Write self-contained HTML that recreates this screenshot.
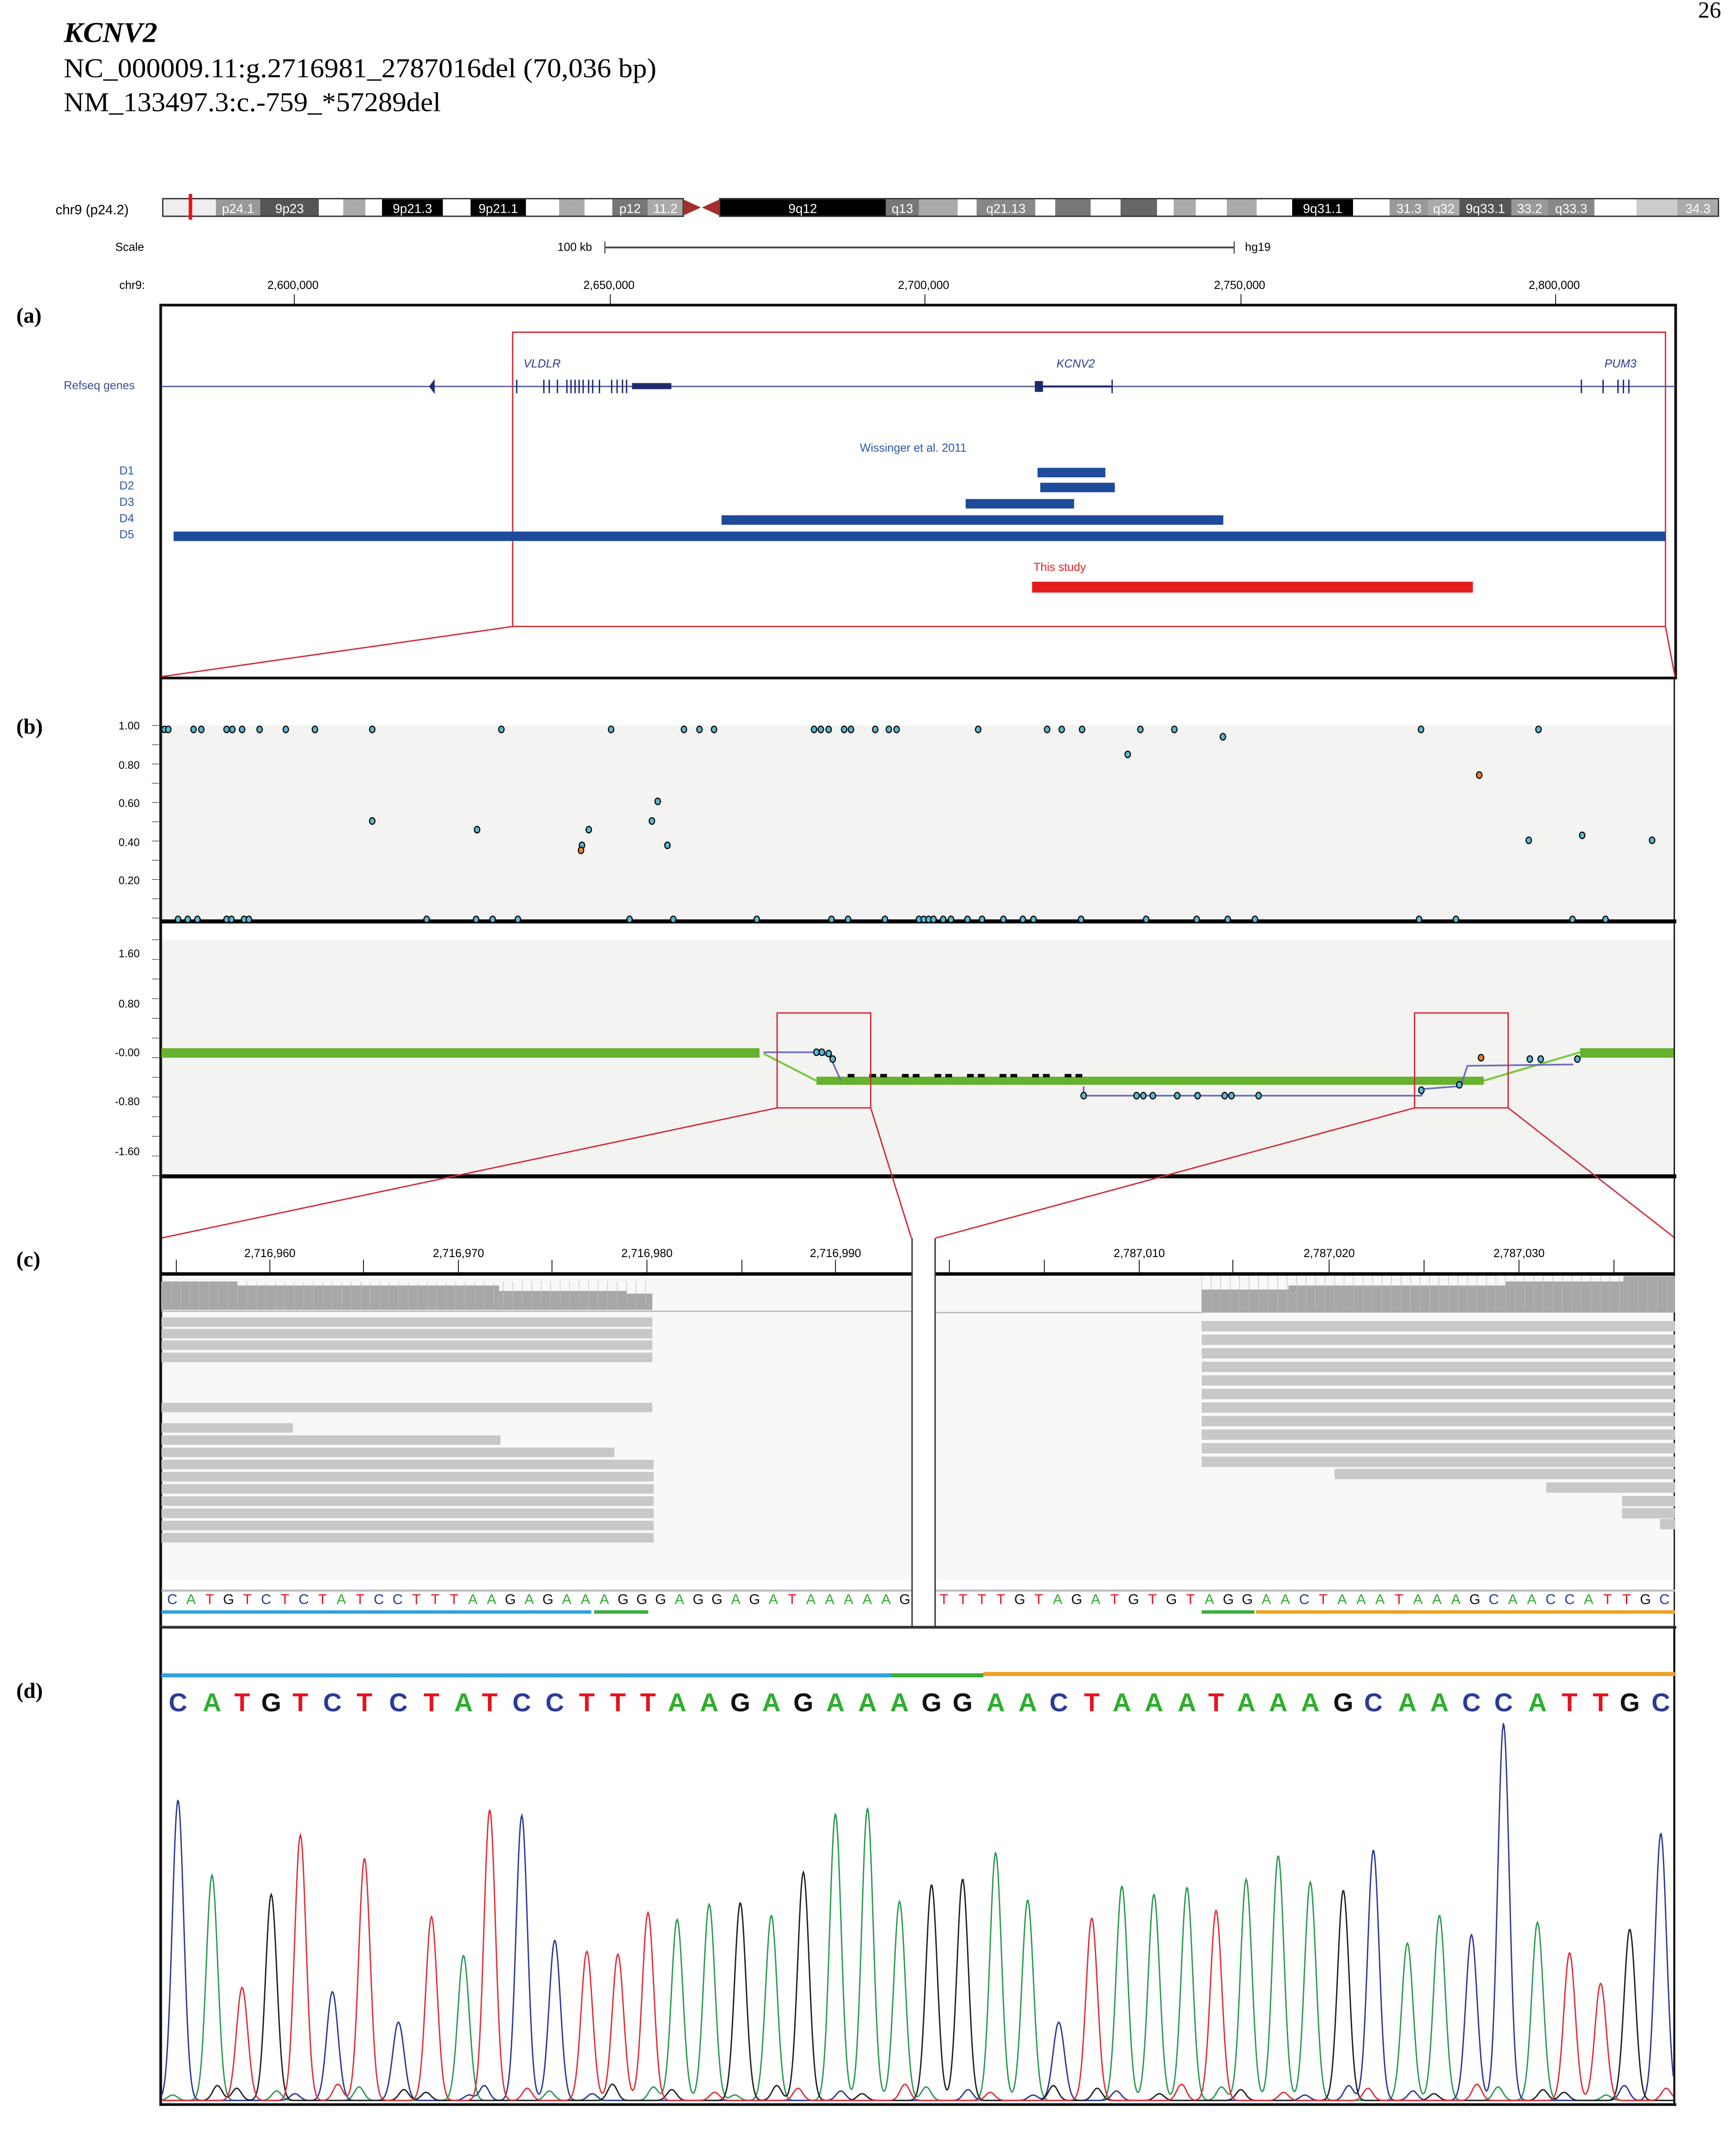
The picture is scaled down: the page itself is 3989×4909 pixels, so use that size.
<!DOCTYPE html>
<html><head><meta charset="utf-8">
<style>
html,body{margin:0;padding:0;background:#fff;}
svg{display:block;}
text{font-family:"Liberation Sans",sans-serif;}
.serif{font-family:"Liberation Serif",serif;}
</style></head>
<body>
<svg id="s" xmlns="http://www.w3.org/2000/svg" width="3989" height="4909" viewBox="0 0 1280 1575.2" preserveAspectRatio="none">
<text class="serif" x="47" y="31" font-size="21" font-weight="bold" font-style="italic" textLength="69" lengthAdjust="spacingAndGlyphs">KCNV2</text>
<text class="serif" x="47" y="57" font-size="20" textLength="437" lengthAdjust="spacingAndGlyphs">NC_000009.11:g.2716981_2787016del (70,036 bp)</text>
<text class="serif" x="47" y="82" font-size="20" textLength="278" lengthAdjust="spacingAndGlyphs">NM_133497.3:c.-759_*57289del</text>
<text class="serif" x="1252" y="13" font-size="17">26</text>

<text x="41" y="158" font-size="10">chr9 (p24.2)</text>
<g id="ideo"></g>
<text x="85" y="185" font-size="8.5">Scale</text>
<text x="411" y="185" font-size="8.5">100 kb</text>
<line x1="446" y1="182.5" x2="910" y2="182.5" stroke="#444" stroke-width="1.3"/>
<line x1="446" y1="178" x2="446" y2="187" stroke="#444" stroke-width="0.8"/>
<line x1="910" y1="178" x2="910" y2="187" stroke="#444" stroke-width="0.8"/>
<text x="918" y="185" font-size="8.5">hg19</text>
<text x="88" y="213" font-size="8.5">chr9:</text>
<g font-size="8.5" text-anchor="middle">
<text x="216" y="213">2,600,000</text><text x="449" y="213">2,650,000</text><text x="681" y="213">2,700,000</text><text x="914" y="213">2,750,000</text><text x="1146" y="213">2,800,000</text>
</g>
<g stroke="#000" stroke-width="0.6">
<line x1="217" y1="217" x2="217" y2="225"/><line x1="450" y1="217" x2="450" y2="225"/><line x1="682" y1="217" x2="682" y2="225"/><line x1="915" y1="217" x2="915" y2="225"/><line x1="1147" y1="217" x2="1147" y2="225"/>
</g>

<g class="serif" font-size="16" font-weight="bold">
<text class="serif" x="12" y="238">(a)</text>
<text class="serif" x="12" y="541">(b)</text>
<text class="serif" x="12" y="934">(c)</text>
<text class="serif" x="12" y="1252">(d)</text>
</g>

<rect x="118.5" y="225" width="1117" height="275" fill="none" stroke="#111" stroke-width="2"/>
<rect x="378" y="245" width="850" height="217" fill="none" stroke="#d32a3a" stroke-width="1"/>
<line x1="378" y1="462" x2="119" y2="499" stroke="#d32a3a" stroke-width="1"/>
<line x1="1228" y1="462" x2="1235" y2="499" stroke="#d32a3a" stroke-width="1"/>
<text x="47" y="287" font-size="8.5" fill="#3b4f8f">Refseq genes</text>
<line x1="119" y1="285" x2="1235" y2="285" stroke="#56608f" stroke-width="1"/>
<g fill="#1e2a6e" stroke="#1e2a6e">
<path d="M317 285 l3 -4 v8 z"/>
<line x1="381" y1="280" x2="381" y2="290" stroke-width="1"/>
<line x1="401" y1="280" x2="401" y2="290"/><line x1="405" y1="280" x2="405" y2="290"/><line x1="411" y1="280" x2="411" y2="290"/>
<line x1="418" y1="280" x2="418" y2="290"/><line x1="421" y1="280" x2="421" y2="290"/><line x1="424" y1="280" x2="424" y2="290"/><line x1="427" y1="280" x2="427" y2="290"/><line x1="430" y1="280" x2="430" y2="290"/><line x1="434" y1="280" x2="434" y2="290"/><line x1="437" y1="280" x2="437" y2="290"/><line x1="442" y1="280" x2="442" y2="290"/>
<line x1="451" y1="280" x2="451" y2="290"/><line x1="455" y1="280" x2="455" y2="290"/><line x1="459" y1="280" x2="459" y2="290"/><line x1="462" y1="280" x2="462" y2="290"/>
<rect x="466" y="282.5" width="29" height="4.5" stroke="none"/>
<rect x="763" y="281" width="6" height="8" stroke="none"/>
<line x1="769" y1="285" x2="820" y2="285" stroke-width="1.5"/>
<line x1="820" y1="280" x2="820" y2="290"/>
<line x1="1166" y1="280" x2="1166" y2="290"/><line x1="1182" y1="280" x2="1182" y2="290"/><line x1="1193" y1="280" x2="1193" y2="290"/><line x1="1197" y1="280" x2="1197" y2="290"/><line x1="1201" y1="280" x2="1201" y2="290"/>
</g>
<g font-size="8.5" font-style="italic" fill="#2d3a8c">
<text x="386" y="271">VLDLR</text><text x="779" y="271">KCNV2</text><text x="1183" y="271">PUM3</text>
</g>
<text x="634" y="333" font-size="8.5" fill="#2a57a8">Wissinger et al. 2011</text>
<g font-size="8.5" fill="#2a57a8">
<text x="88" y="350">D1</text><text x="88" y="361">D2</text><text x="88" y="373">D3</text><text x="88" y="385">D4</text><text x="88" y="397">D5</text>
</g>
<g fill="#1f4b9c">
<rect x="765" y="345" width="50" height="7"/>
<rect x="767" y="356" width="55" height="7"/>
<rect x="712" y="368" width="80" height="7"/>
<rect x="532" y="380" width="370" height="7"/>
<rect x="128" y="392" width="1100" height="7"/>
</g>
<text x="762" y="421" font-size="8.5" fill="#e32020">This study</text>
<rect x="761" y="429" width="325" height="8" fill="#e31c1c"/>

<rect x="119" y="535" width="1116" height="144" fill="#f3f3f1"/>
<rect x="119" y="693" width="1116" height="174" fill="#f3f3f1"/>
<line x1="118.5" y1="500" x2="118.5" y2="868" stroke="#111" stroke-width="2"/>
<line x1="1234.5" y1="500" x2="1234.5" y2="868" stroke="#111" stroke-width="1"/>
<line x1="118" y1="679.5" x2="1236" y2="679.5" stroke="#000" stroke-width="3"/>
<line x1="118" y1="867.5" x2="1236" y2="867.5" stroke="#000" stroke-width="3"/>
<g font-size="8" text-anchor="end">
<text x="103" y="538">1.00</text><text x="103" y="567">0.80</text><text x="103" y="595">0.60</text><text x="103" y="624">0.40</text><text x="103" y="652">0.20</text>
<text x="103" y="706">1.60</text><text x="103" y="743">0.80</text><text x="103" y="779">-0.00</text><text x="103" y="815">-0.80</text><text x="103" y="852">-1.60</text>
</g>
<g id="bdots"></g>

<rect x="119" y="940" width="553" height="225" fill="#f8f8f8"/>
<rect x="690" y="940" width="545" height="225" fill="#f8f8f8"/>
<line x1="118.5" y1="868" x2="118.5" y2="1200" stroke="#111" stroke-width="2"/>
<line x1="672.5" y1="913" x2="672.5" y2="1200" stroke="#333" stroke-width="1"/>
<line x1="689.5" y1="913" x2="689.5" y2="1200" stroke="#333" stroke-width="1"/>
<line x1="1234.5" y1="868" x2="1234.5" y2="1200" stroke="#111" stroke-width="1"/>
<line x1="119" y1="939.5" x2="672" y2="939.5" stroke="#000" stroke-width="2.5"/>
<line x1="690" y1="939.5" x2="1235" y2="939.5" stroke="#000" stroke-width="2.5"/>
<line x1="119" y1="1173" x2="672" y2="1173" stroke="#bbb" stroke-width="1.5"/>
<line x1="690" y1="1173" x2="1235" y2="1173" stroke="#bbb" stroke-width="1.5"/>
<line x1="118" y1="1200" x2="1236" y2="1200" stroke="#333" stroke-width="2"/>
<g font-size="8.5" text-anchor="middle">
<text x="199" y="927">2,716,960</text><text x="338" y="927">2,716,970</text><text x="477" y="927">2,716,980</text><text x="616" y="927">2,716,990</text>
<text x="840" y="927">2,787,010</text><text x="980" y="927">2,787,020</text><text x="1120" y="927">2,787,030</text>
</g>
<g id="cstuff"></g>

<line x1="118.5" y1="1200" x2="118.5" y2="1553" stroke="#111" stroke-width="2"/>
<line x1="1234.5" y1="1200" x2="1234.5" y2="1553" stroke="#111" stroke-width="1.5"/>
<line x1="118" y1="1552" x2="1236" y2="1552" stroke="#111" stroke-width="2"/>
<g id="dstuff"></g>
</svg>
<script>
(function(){
var NS="http://www.w3.org/2000/svg";
function el(p,t,a,txt){var e=document.createElementNS(NS,t);for(var k in a)e.setAttribute(k,a[k]);if(txt!==undefined)e.textContent=txt;p.appendChild(e);return e;}
var ig=document.getElementById('ideo');var k=0.8164;
var bands=[[147,195,'#eee',''],[195,235,'#999','p24.1'],[235,288,'#555','9p23'],[288,310,'#fff',''],[310,330,'#aaa',''],[330,345,'#fff',''],[345,400,'#000','9p21.3'],[400,425,'#fff',''],[425,475,'#000','9p21.1'],[475,505,'#fff',''],[505,528,'#aaa',''],[528,553,'#fff',''],[553,585,'#777','p12'],[585,617,'#aaa','11.2'],[650,800,'#000','9q12'],[800,830,'#777','q13'],[830,865,'#aaa',''],[865,882,'#fff',''],[882,935,'#888','q21.13'],[935,953,'#fff',''],[953,985,'#777',''],[985,1012,'#fff',''],[1012,1045,'#666',''],[1045,1060,'#fff',''],[1060,1080,'#aaa',''],[1080,1108,'#fff',''],[1108,1135,'#aaa',''],[1135,1167,'#fff',''],[1167,1222,'#000','9q31.1'],[1222,1255,'#fff',''],[1255,1290,'#999','31.3'],[1290,1318,'#aaa','q32'],[1318,1365,'#555','9q33.1'],[1365,1398,'#999','33.2'],[1398,1440,'#888','q33.3'],[1440,1478,'#fff',''],[1478,1515,'#ccc',''],[1515,1552,'#aaa','34.3']];
bands.forEach(function(b){var x=b[0]*k,w=(b[1]-b[0])*k;el(ig,'rect',{x:x,y:147,width:w,height:12,fill:b[2]});
if(b[3]){el(ig,'text',{x:x+w/2,y:157,'font-size':9.5,'text-anchor':'middle',fill:'#fff'},b[3]);}});
el(ig,'rect',{x:147*k,y:146.5,width:(617-147)*k,height:13,fill:'none',stroke:'#333','stroke-width':1});
el(ig,'rect',{x:650*k,y:146.5,width:(1552-650)*k,height:13,fill:'none',stroke:'#333','stroke-width':1});
el(ig,'path',{d:'M'+(617*k)+' 147 L'+(633*k)+' 153 L'+(617*k)+' 159 Z M'+(650*k)+' 147 L'+(634*k)+' 153 L'+(650*k)+' 159 Z',fill:'#a0302c'});
el(ig,'rect',{x:172*k-1.3,y:143,width:2.6,height:19,fill:'#e8101a'});
var bd=document.getElementById('bdots');
function X(o){return 115.5+o*0.716;}function Y(o){return 497.4+o*0.2456;}
for(var i=0;i<11;i++){el(bd,'line',{x1:112,x2:118,y1:535+i*14.2,y2:535+i*14.2,stroke:'#555','stroke-width':0.5});}
function dot(x,y,c){el(bd,'ellipse',{cx:x,cy:y,rx:2,ry:2.4,fill:c||'#5ab7d0',stroke:'#000','stroke-width':0.8});}
[8,12,38,46,72,78,88,106,133,163,222,355,468,543,559,574,677,684,692,708,715,740,754,762,846,917,932,953,1013,1048,1302,1423].forEach(function(o){dot(X(o),Y(165));});
[[1098,187],[1000,240],[516,381],[222,440],[510,440],[330,466],[445,466],[438,513],[526,513],[1413,498],[1468,483],[1540,498]].forEach(function(p){dot(X(p[0]),Y(p[1]));});
dot(X(1362),Y(302),'#e8861a');dot(X(437),Y(528),'#e8861a');
[22,32,42,72,77,90,95,278,329,346,372,487,532,618,695,712,750,785,790,795,800,810,818,835,850,872,892,903,952,1019,1071,1103,1131,1300,1338,1458,1492].forEach(function(o){dot(X(o),678);});
el(bd,'rect',{x:119,y:773,width:441,height:7,fill:'#66b22e'});
el(bd,'rect',{x:1165,y:773,width:69,height:7,fill:'#66b22e'});
el(bd,'rect',{x:602,y:794,width:492,height:6,fill:'#66b22e'});
el(bd,'path',{d:'M563 777 L602 797 M1094 797 L1165 776',stroke:'#7ac943','stroke-width':1.5,fill:'none'});
el(bd,'path',{d:'M563 776 L602 776 L612 779 L620 797 M799 801 L799 808 L1048 808 L1050 803 L1077 801 L1082 786 L1160 785',stroke:'#6a6ac0','stroke-width':1.2,fill:'none'});
[[602,776],[606,776],[611,777],[614,781],[799,808],[838,808],[843,808],[850,808],[868,808],[883,808],[903,808],[908,808],[928,808],[1048,804],[1076,800],[1128,781],[1136,781],[1163,781],[1092,780]].forEach(function(p,i){dot(p[0],p[1],i==18?'#e8861a':null);});
for(var x=625;x<800;x+=8){if(x%3)el(bd,'rect',{x:x,y:792,width:5,height:2.5,fill:'#000'});}
el(bd,'rect',{x:573,y:747,width:69,height:70,fill:'none',stroke:'#d32a3a','stroke-width':1});
el(bd,'rect',{x:1043,y:747,width:69,height:70,fill:'none',stroke:'#d32a3a','stroke-width':1});
el(bd,'path',{d:'M573 817 L119 913 M642 817 L672 913 M1043 817 L690 913 M1112 817 L1235 913',stroke:'#d32a3a','stroke-width':1,fill:'none'});
for(var i=0;i<13;i++){var y=693+i*14.5;el(bd,'line',{x1:112,x2:118,y1:y,y2:y,stroke:'#555','stroke-width':0.5});}
var cs=document.getElementById('cstuff');
[130,199,268,338,407,477,547,616,700,770,840,909,980,1050,1120,1190].forEach(function(x){el(cs,'line',{x1:x,x2:x,y1:929,y2:939,stroke:'#000','stroke-width':0.6});});
var covL=[[119,175,945],[175,368,948],[368,462,952],[462,481,954]];
covL.forEach(function(c){el(cs,'rect',{x:c[0],y:c[2],width:c[1]-c[0],height:966-c[2],fill:'#a8a8a8'});});
for(var x=119;x<481;x+=7)el(cs,'line',{x1:x,x2:x,y1:945,y2:966,stroke:'#bbb','stroke-width':0.4});
el(cs,'line',{x1:119,x2:672,y1:967,y2:967,stroke:'#bbb','stroke-width':1});
var covR=[[886,950,951],[950,1110,948],[1110,1197,945],[1197,1235,941]];
covR.forEach(function(c){el(cs,'rect',{x:c[0],y:c[2],width:c[1]-c[0],height:968-c[2],fill:'#a8a8a8'});});
for(var x=886;x<1235;x+=7)el(cs,'line',{x1:x,x2:x,y1:941,y2:968,stroke:'#bbb','stroke-width':0.4});
el(cs,'line',{x1:690,x2:886,y1:968,y2:968,stroke:'#bbb','stroke-width':1});
[975,983.5,992,1001,1038].forEach(function(y){el(cs,'rect',{x:119,y:y-3.5,width:362,height:7,fill:'#c8c8c8'});});
[[216,1053],[369,1062],[453,1071],[482,1080],[482,1089],[482,1098],[482,1107],[482,1116],[482,1125],[482,1134]].forEach(function(r){el(cs,'rect',{x:119,y:r[1]-3.5,width:r[0]-119,height:7,fill:'#c8c8c8'});});
for(var i=0;i<11;i++){var y=978+i*10;el(cs,'rect',{x:886,y:y-3.8,width:349,height:7.6,fill:'#c8c8c8'});}
[[984,1087],[1140,1097],[1196,1107],[1196,1116],[1224,1124]].forEach(function(r){el(cs,'rect',{x:r[0],y:r[1]-3.8,width:1235-r[0],height:7.6,fill:'#c8c8c8'});});
var col={A:'#2fae2f',C:'#2b3a9a',G:'#111',T:'#e3141e'};
function seq(p,s,x0,dx,y,fs,bold){for(var i=0;i<s.length;i++){el(p,'text',{x:x0+i*dx,y:y,'font-size':fs,'text-anchor':'middle',fill:col[s[i]],'font-weight':bold?'bold':'normal'},s[i]);}}
seq(cs,'CATGTCTCTATCCTTTAAGAGAAAGGGAGGAGATAAAAAG',127,13.85,1183,10.5,false);
seq(cs,'TTTTGTAGATGTGTAGGAACTAAATAAAGCAACCATTGC',696,13.98,1183,10.5,false);
el(cs,'rect',{x:119,y:1187.5,width:317,height:2.5,fill:'#2fa2dd'});
el(cs,'rect',{x:438,y:1187.5,width:40,height:2.5,fill:'#3aae3a'});
el(cs,'rect',{x:886,y:1187.5,width:39,height:2.5,fill:'#3aae3a'});
el(cs,'rect',{x:926,y:1187.5,width:309,height:2.5,fill:'#f0a020'});
var ds=document.getElementById('dstuff');
el(ds,'rect',{x:119,y:1234,width:603,height:3,fill:'#2fa2dd'});
el(ds,'rect',{x:657,y:1234,width:68,height:3,fill:'#3aae3a'});
el(ds,'rect',{x:725,y:1233,width:510,height:3,fill:'#f0a020'});
var S='CATGTCTCTATCCTTTAAGAGAAAGGAACTAAATAAAGCAACCATTGC';
var P=[[22,450],[57,720],[88,1125],[118,790],[148,575],[181,1140],[214,660],[249,1250],[283,870],[316,1010],[343,485],[376,505],[410,955],[443,995],[475,1005],[506,855],[536,880],[569,825],[601,820],[633,865],[666,710],[699,500],[732,480],[765,815],[798,755],[830,735],[864,640],[897,810],[929,1250],[963,875],[994,760],[1027,790],[1061,765],[1091,848],[1122,735],[1155,650],[1188,745],[1222,775],[1253,630],[1288,965],[1321,865],[1354,935],[1387,175],[1422,890],[1455,1000],[1487,1110],[1517,915],[1549,570]];
for(var i=0;i<S.length;i++){var x=115.5+P[i][0]*0.716;el(ds,'text',{x:x,y:1262,'font-size':19,'text-anchor':'middle','font-weight':'bold',fill:col[S[i]]},S[i]);}
var base=1549,cc={A:'#2b9a52',C:'#2e3a96',G:'#222',T:'#e0303a'};
var peaks={A:[],C:[],G:[],T:[]};
for(var i=0;i<S.length;i++){var x=115.5+P[i][0]*0.716,pk=1235.4+P[i][1]*0.2047;peaks[S[i]].push([x,base-pk,4.2]);
var others='ACGT'.replace(S[i],'');var o=others[i%3];peaks[o].push([x+((i%2)?4:-4),4+(i*7%9),3.5]);}
for(var b in peaks){var d='';for(var x=119;x<=1234;x+=0.6){var v=0;peaks[b].forEach(function(p){var t=(x-p[0])/p[2];if(Math.abs(t)<5)v+=p[1]*Math.exp(-t*t/2);});
d+=(d?'L':'M')+x.toFixed(1)+' '+(base-v).toFixed(1);}
el(ds,'path',{d:d,fill:'none',stroke:cc[b],'stroke-width':1});}
})();
</script>
</body></html>
